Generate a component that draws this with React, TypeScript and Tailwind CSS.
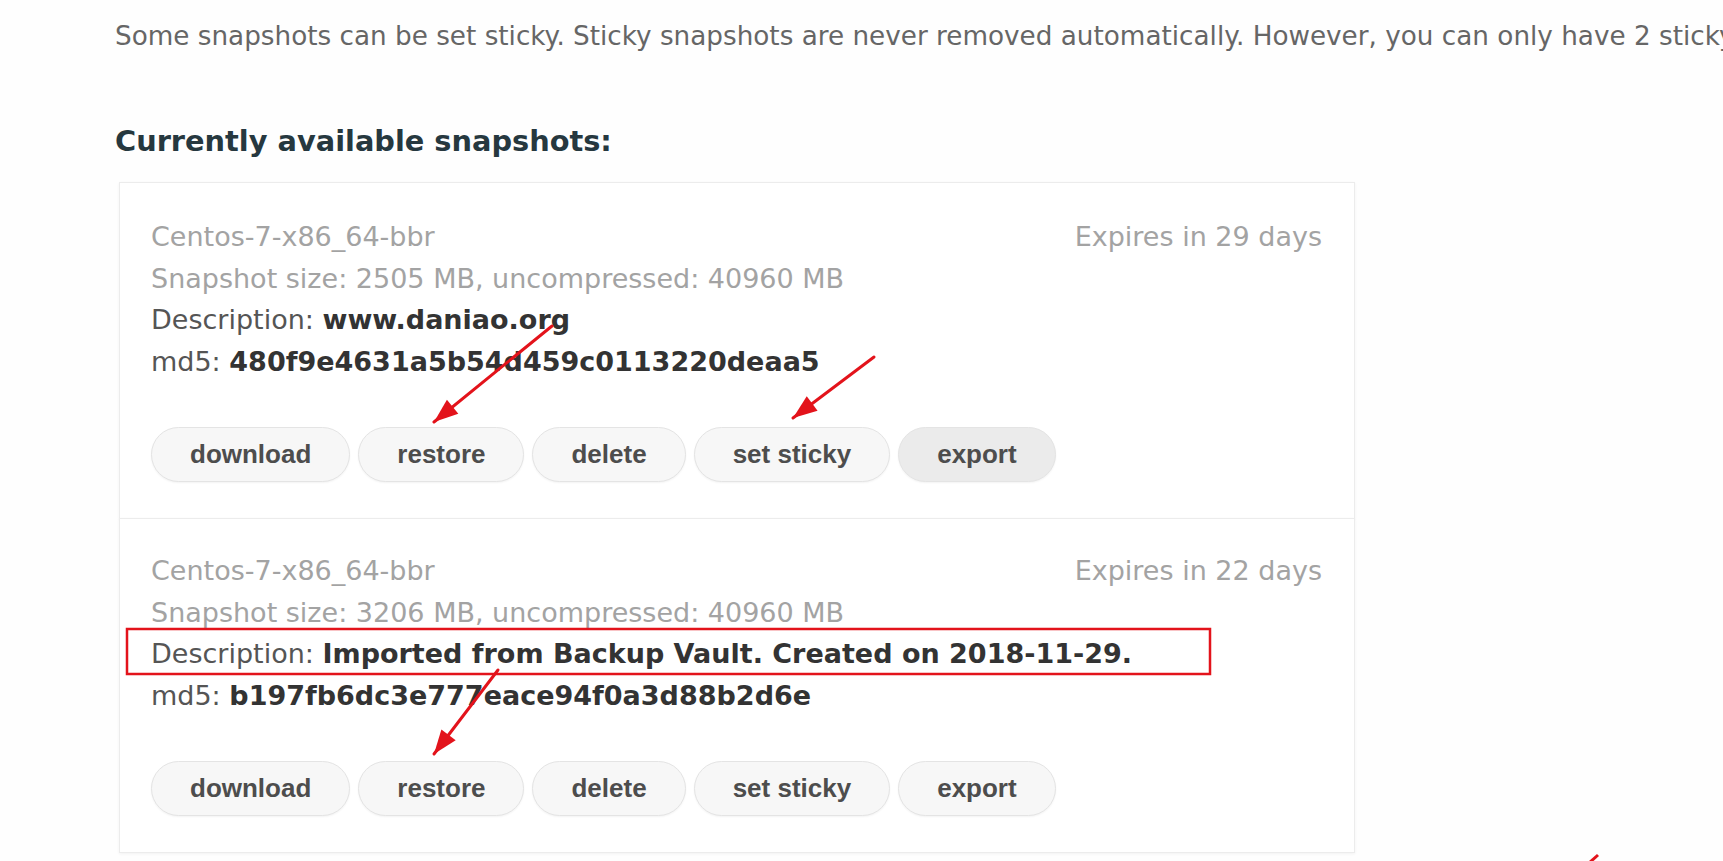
import React from "react";

type Arrow = { x1: number; y1: number; x2: number; y2: number };

const arrows: Arrow[] = [
  { x1: 552, y1: 326, x2: 434, y2: 422 },
  { x1: 874, y1: 357, x2: 793, y2: 418 },
  { x1: 498, y1: 670, x2: 434, y2: 754 },
];

function head(a: Arrow) {
  const dx = a.x2 - a.x1;
  const dy = a.y2 - a.y1;
  const len = Math.hypot(dx, dy);
  const ux = dx / len;
  const uy = dy / len;
  const L = 24;
  const W = 9;
  const bx = a.x2 - ux * L;
  const by = a.y2 - uy * L;
  const nx = -uy;
  const ny = ux;
  return `${a.x2},${a.y2} ${bx + nx * W},${by + ny * W} ${bx - nx * W},${by - ny * W}`;
}

function Btn({ label, active }: { label: string; active?: boolean }) {
  return (
    <button
      className={
        "h-[55px] px-[38px] rounded-full border border-[#e4e4e4] font-['Liberation_Sans',Arial,sans-serif] font-bold text-[26px] text-[#4d4d4d] shadow-[0_1px_2px_rgba(0,0,0,0.05)] " +
        (active ? "bg-[#ebebeb]" : "bg-[#f7f7f7]")
      }
    >
      {label}
    </button>
  );
}

type Snap = {
  name: string;
  expires: string;
  size: string;
  desc: string;
  md5: string;
  exportActive?: boolean;
};

function Card({ s, className }: { s: Snap; className?: string }) {
  return (
    <div
      className={
        "w-[1236px] border border-[#ececec] bg-white pl-[31px] pr-[32px] pb-[36px] shadow-[0_1px_3px_rgba(0,0,0,0.05)] " +
        (className ?? "")
      }
    >
      <div className="text-[27px] leading-[41.5px]">
        <div className="flex justify-between text-[#a3a3a3]">
          <span>{s.name}</span>
          <span>{s.expires}</span>
        </div>
        <div className="text-[#a3a3a3]">{s.size}</div>
        <div className="text-[#555555]">
          Description: <span className="font-bold text-[#333333]">{s.desc}</span>
        </div>
        <div className="text-[#555555]">
          md5: <span className="font-bold text-[#333333]">{s.md5}</span>
        </div>
      </div>
      <div className="mt-[45px] flex gap-[8px]">
        <Btn label="download" />
        <Btn label="restore" />
        <Btn label="delete" />
        <Btn label="set sticky" />
        <Btn label="export" active={s.exportActive} />
      </div>
    </div>
  );
}

export default function App() {
  const snaps: Snap[] = [
    {
      name: "Centos-7-x86_64-bbr",
      expires: "Expires in 29 days",
      size: "Snapshot size: 2505 MB, uncompressed: 40960 MB",
      desc: "www.daniao.org",
      md5: "480f9e4631a5b54d459c0113220deaa5",
      exportActive: true,
    },
    {
      name: "Centos-7-x86_64-bbr",
      expires: "Expires in 22 days",
      size: "Snapshot size: 3206 MB, uncompressed: 40960 MB",
      desc: "Imported from Backup Vault. Created on 2018-11-29.",
      md5: "b197fb6dc3e777eace94f0a3d88b2d6e",
    },
  ];

  return (
    <div className="relative h-[861px] w-full overflow-hidden bg-[#fefefe] font-['DejaVu_Sans',Verdana,sans-serif]">
      <div className="pl-[115px] pt-[17px]">
        <p className="whitespace-nowrap text-[26.25px] leading-[39px] text-[#666666]">
          Some snapshots can be set sticky. Sticky snapshots are never removed automatically. However, you can only have 2 sticky snapshots.
        </p>
        <h2 className="mt-[65px] text-[28.8px] font-bold leading-[40px] text-[#26383f]">
          Currently available snapshots:
        </h2>
        <div className="ml-[4px] mt-[21px] flex flex-col">
          <Card s={snaps[0]} className="pt-[33px]" />
          <Card s={snaps[1]} className="-mt-px pt-[31px]" />
        </div>
      </div>

      <svg className="pointer-events-none absolute inset-0" width="1723" height="861">
        <rect x="127" y="629" width="1083" height="45" fill="none" stroke="#e3131b" strokeWidth="2.5" />
        {arrows.map((a, i) => (
          <g key={i}>
            <line x1={a.x1} y1={a.y1} x2={a.x2} y2={a.y2} stroke="#e3131b" strokeWidth="3" strokeLinecap="round" />
            <polygon points={head(a)} fill="#e3131b" />
          </g>
        ))}
        <line x1="1589" y1="863" x2="1598" y2="855" stroke="#e3131b" strokeWidth="3" />
      </svg>
    </div>
  );
}
